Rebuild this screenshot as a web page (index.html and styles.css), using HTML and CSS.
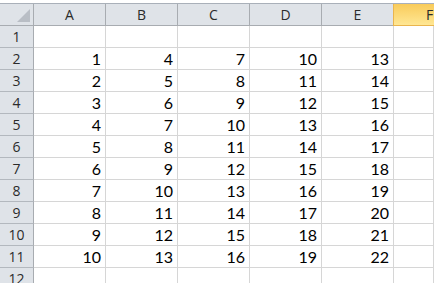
FILE: index.html
```html
<!DOCTYPE html>
<html lang="en">
<head>
    <meta charset="UTF-8">
    <title>Sheet1</title>
    <link rel="stylesheet" href="styles.css">
</head>
<body>

    <div class="sheet" id="sheet">
        <div class="corner"><span class="tri"></span></div>
        <div class="col-head">A</div>
        <div class="col-head">B</div>
        <div class="col-head">C</div>
        <div class="col-head">D</div>
        <div class="col-head">E</div>
        <div class="col-head selected">F</div>
    </div>

    <script>
        const sheet = document.getElementById("sheet");
        for (let r = 1; r <= 12; r++) {
            const head = document.createElement("div");
            head.className = "row-head";
            head.textContent = r;
            sheet.appendChild(head);
            for (let c = 0; c < 6; c++) {
                const cell = document.createElement("div");
                cell.className = "cell";
                if (r >= 2 && r <= 11 && c < 5) {
                    cell.textContent = (r - 1) + c * 3;
                }
                sheet.appendChild(cell);
            }
        }
    </script>

</body>
</html>
```

FILE: styles.css
```css
body {
    margin: 0;
    padding: 0;
    background: #fff;
    overflow: hidden;
}
.sheet {
    display: grid;
    grid-template-columns: 34px repeat(5, 72px) 1fr;
    grid-auto-rows: 22px;
    margin-top: 3px;
    border-top: 1px solid #a9b0b9;
    font-family: Lato, "Open Sans", sans-serif;
}
.corner, .col-head, .row-head, .cell {
    box-sizing: border-box;
    border-right: 1px solid #d6d6d6;
    border-bottom: 1px solid #d6d6d6;
}
.corner {
    position: relative;
    background: #dfe3e8;
    border-right-color: #a8acb1;
    border-bottom-color: #a8acb1;
}
.tri {
    position: absolute;
    right: 3px;
    bottom: 3px;
    width: 0;
    height: 0;
    border-left: 13px solid transparent;
    border-bottom: 13px solid #b9bec5;
}
.col-head {
    height: 22px;
    background: #dfe3e8;
    border-right-color: #a8acb1;
    border-bottom-color: #a8acb1;
    color: #2b2b2b;
    font-family: "Open Sans", sans-serif;
    font-size: 14px;
    text-align: center;
    line-height: 21px;
}
.col-head.selected {
    background: linear-gradient(#f9cb5a, #ffe794);
    border-right: none;
    border-bottom-color: #eab54e;
    border-left: 1px solid #eab54e;
    margin-left: -1px;
    text-indent: 31px;
}
.row-head {
    background: #dfe3e8;
    border-right-color: #a8acb1;
    border-bottom-color: #b3b8be;
    color: #2b2b2b;
    font-family: "Open Sans", sans-serif;
    font-size: 14px;
    text-align: center;
    line-height: 22px;
}
.cell {
    color: #000;
    font-size: 16px;
    text-align: right;
    padding-right: 4px;
    line-height: 22px;
}
```
